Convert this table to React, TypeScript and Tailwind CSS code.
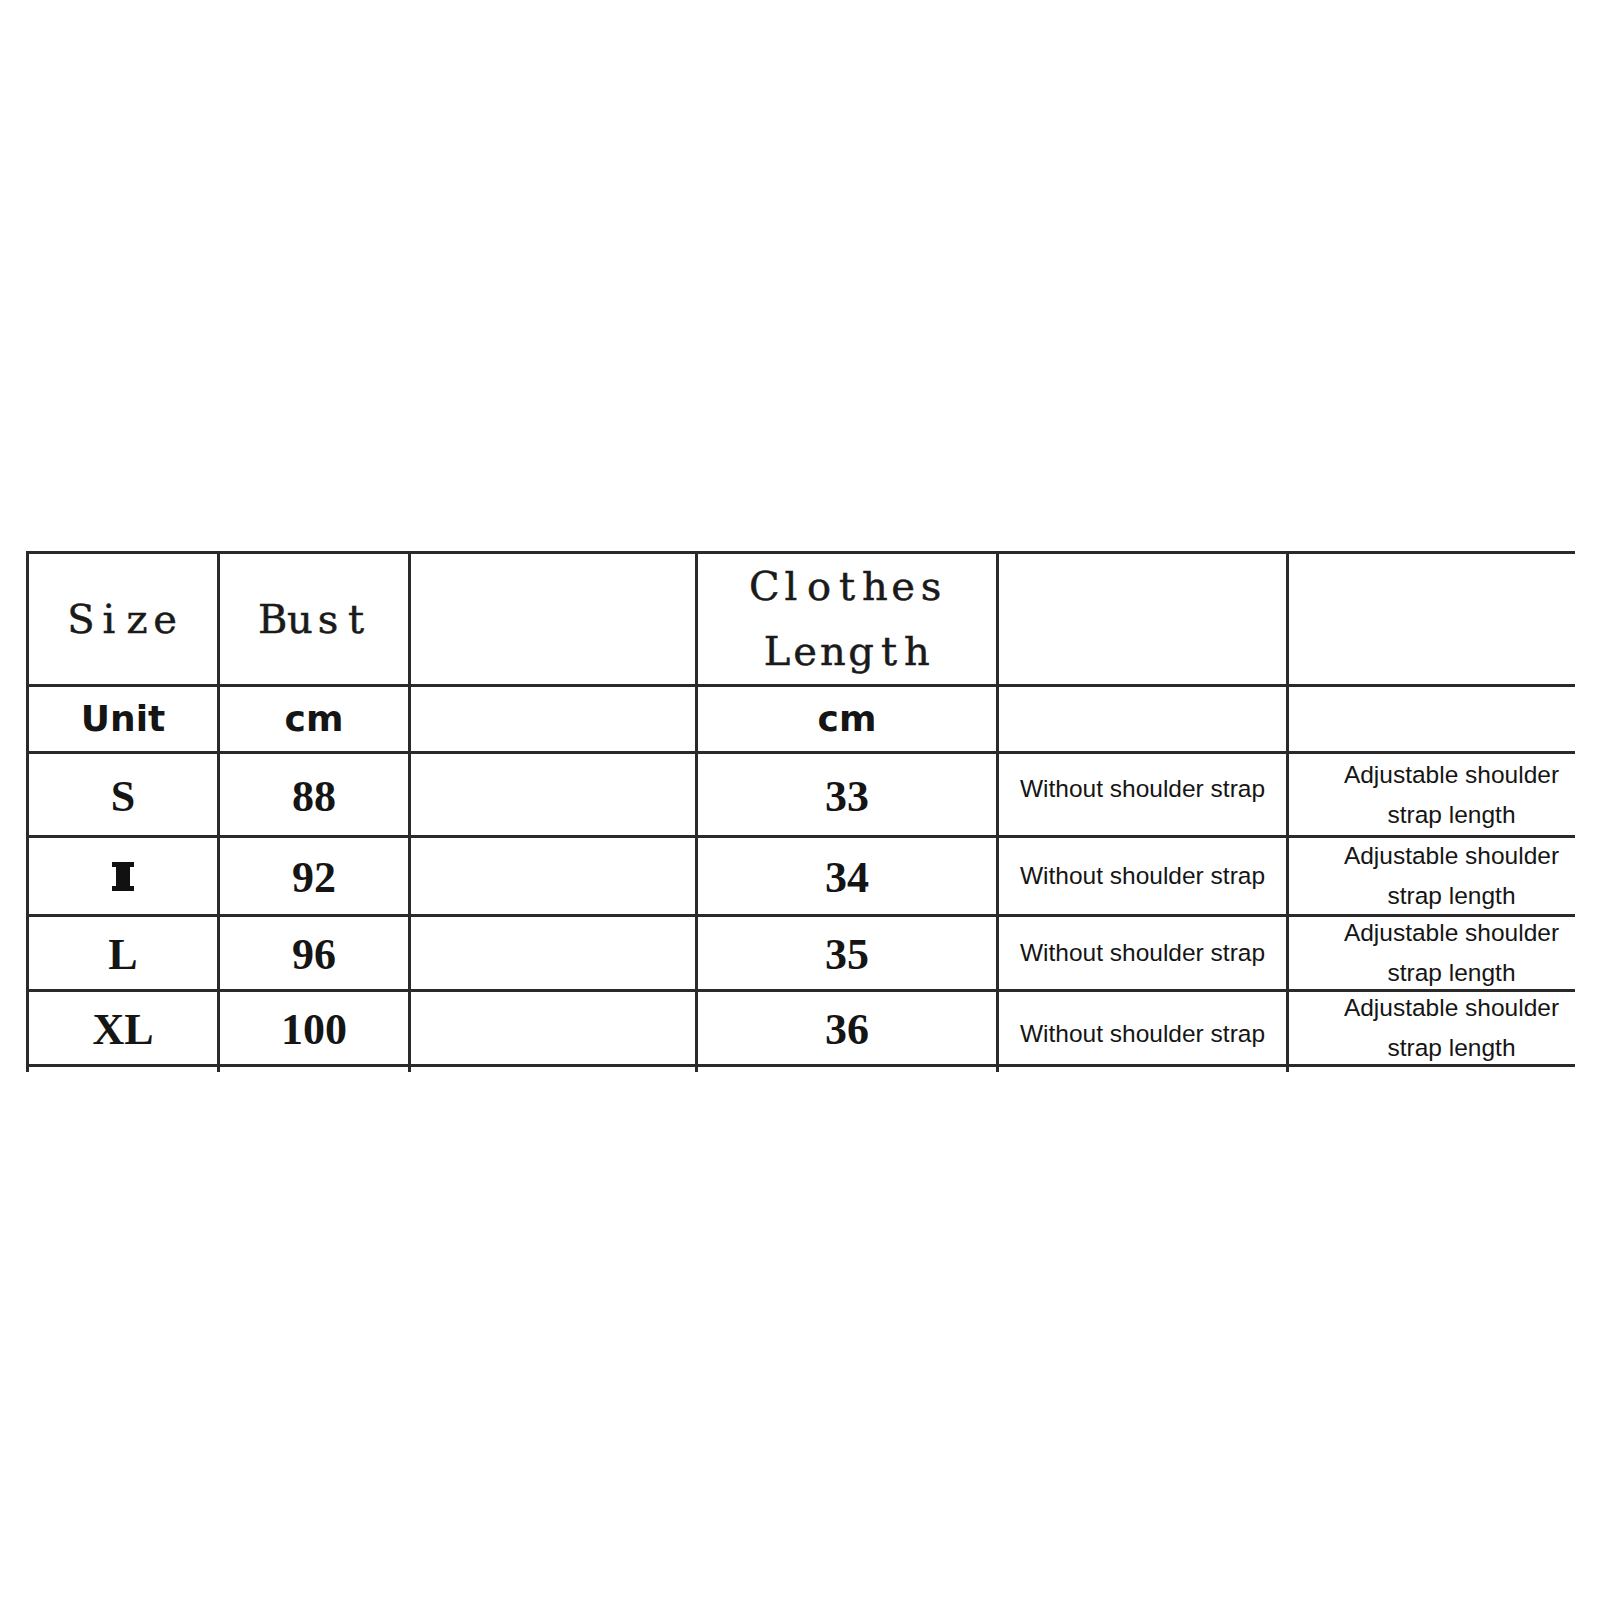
import React from 'react';

const line = 'border-[#2a2a2a]';

const Cell: React.FC<{ children?: React.ReactNode; className?: string }> = ({ children, className = '' }) => (
  <div className={`border-l-[3px] border-b-[3px] ${line} flex flex-col items-center justify-center text-center text-[#151515] ${className}`}>
    {children}
  </div>
);

// header words are set in a fixed-width serif, one 28px slot per letter
const Mono: React.FC<{ text: string }> = ({ text }) => (
  <span className="flex font-['DejaVu_Serif',serif] text-[40px] leading-[65px] text-[#1a1a1a] [-webkit-text-stroke:0.5px_#1a1a1a]">
    {text.split('').map((ch, i) => (
      <span key={i} className="w-[28px] text-center">{ch}</span>
    ))}
  </span>
);

// the "M" in the source image is a broken glyph, drawn as a black bar with serifs
const BrokenM = () => (
  <span aria-label="M" className="flex flex-col items-center">
    <span className="w-[22px] h-[5px] bg-[#111]" />
    <span className="w-[14px] h-[19px] bg-[#111]" />
    <span className="w-[22px] h-[5px] bg-[#111]" />
  </span>
);

const rows: { size: React.ReactNode; bust: string; length: string; h: string; nudge: string }[] = [
  { size: 'S', bust: '88', length: '33', h: 'h-[84px]', nudge: '-mt-[12px]' },
  { size: <BrokenM />, bust: '92', length: '34', h: 'h-[79px]', nudge: '' },
  { size: 'L', bust: '96', length: '35', h: 'h-[75px]', nudge: '' },
  { size: 'XL', bust: '100', length: '36', h: 'h-[75px]', nudge: 'mt-[12px]' },
];

const unit = "font-['DejaVu_Sans',sans-serif] font-bold text-[36px]";
const num = "font-['Liberation_Serif',serif] font-bold text-[44px] leading-none pt-[4px]";
const note = "font-['Liberation_Sans',Arial,sans-serif] text-[24.5px] leading-[40px]";

export default function App() {
  return (
    <div className="w-[1600px] h-[1600px] bg-white pt-[551px] pl-[26px]">
      <div className="w-[1549px] overflow-hidden">
        <div className={`grid grid-cols-[191px_191px_287px_301px_290px_328px] border-t-[3px] ${line} w-max`}>
          <Cell className="h-[133px]"><Mono text="Size" /></Cell>
          <Cell className="h-[133px]"><Mono text="Bust" /></Cell>
          <Cell className="h-[133px]" />
          <Cell className="h-[133px]">
            <Mono text="Clothes" />
            <Mono text="Length" />
          </Cell>
          <Cell className="h-[133px]" />
          <Cell className="h-[133px]" />

          <Cell className="h-[67px]"><span className={unit}>Unit</span></Cell>
          <Cell className="h-[67px]"><span className={unit}>cm</span></Cell>
          <Cell className="h-[67px]" />
          <Cell className="h-[67px]"><span className={unit}>cm</span></Cell>
          <Cell className="h-[67px]" />
          <Cell className="h-[67px]" />

          {rows.map((r, i) => (
            <React.Fragment key={i}>
              <Cell className={r.h}>{typeof r.size === 'string' ? <span className={num}>{r.size}</span> : r.size}</Cell>
              <Cell className={r.h}><span className={num}>{r.bust}</span></Cell>
              <Cell className={r.h} />
              <Cell className={r.h}><span className={num}>{r.length}</span></Cell>
              <Cell className={r.h}><span className={`${note} ${r.nudge}`}>Without shoulder strap</span></Cell>
              <Cell className={r.h}>
                <span className={note}>Adjustable shoulder</span>
                <span className={note}>strap length</span>
              </Cell>
            </React.Fragment>
          ))}

          {[0, 1, 2, 3, 4, 5].map((k) => (
            <div key={k} className={`h-[5px] border-l-[3px] ${line}`} />
          ))}
        </div>
      </div>
    </div>
  );
}
